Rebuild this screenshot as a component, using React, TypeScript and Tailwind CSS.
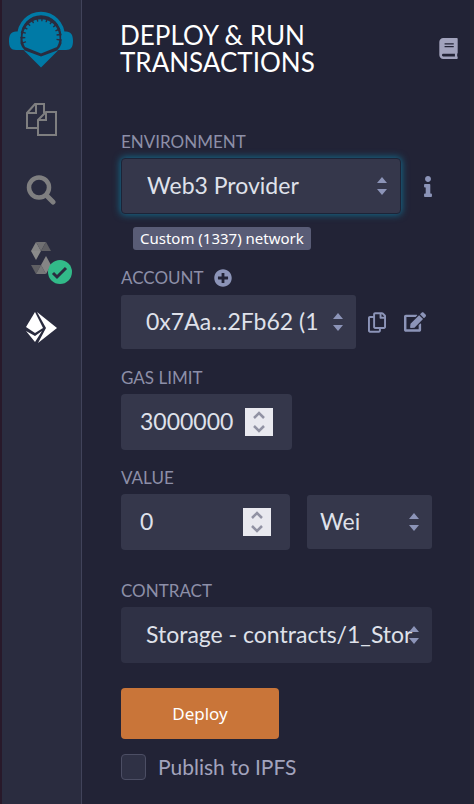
import { useState, type ReactNode } from "react";
import { FaBook, FaEdit, FaInfo, FaPlusCircle, FaRegCopy } from "react-icons/fa";

function SelectBox({
  id,
  label,
  value,
  className,
  textClass = "pl-[25px]",
}: {
  id: string;
  label?: string;
  value: string;
  className: string;
  textClass?: string;
}) {
  return (
    <div className={`relative ${className}`}>
      <select
        id={id}
        aria-label={label}
        className={`h-full w-full appearance-none rounded-[3px] bg-transparent pb-[2px] text-[23px] text-[#dfe1ea] outline-none ${textClass}`}
      >
        <option>{value}</option>
      </select>
      <svg
        viewBox="0 0 10 18"
        className="pointer-events-none absolute top-1/2 right-[13px] h-[18px] w-[10px] -translate-y-1/2 fill-[#8c94b8]"
      >
        <path d="M5 0 10 6H0ZM0 12H10L5 18Z" />
      </svg>
    </div>
  );
}

function NumberBox({ id, initial, className }: { id: string; initial: number; className: string }) {
  const [value, setValue] = useState(initial);
  return (
    <div className={`flex h-14 items-center rounded bg-[#35374b] px-[19px] ${className}`}>
      <input
        id={id}
        type="number"
        value={value}
        onChange={(e) => setValue(Number(e.target.value))}
        className="min-w-0 flex-1 bg-transparent pb-[2px] text-[23px] text-[#dfe1ea] outline-none [appearance:textfield] [&::-webkit-inner-spin-button]:appearance-none"
      />
      <div className="flex h-7 w-7 flex-col bg-[#e9e9ef] text-[#9192a3]">
        <button type="button" aria-label="Increase" onClick={() => setValue(value + 1)} className="flex h-[14px] items-center justify-center">
          <svg viewBox="0 0 12 8" className="h-2 w-3" fill="none" stroke="currentColor" strokeWidth="2.5">
            <path d="M1 7 6 2l5 5" />
          </svg>
        </button>
        <button type="button" aria-label="Decrease" onClick={() => setValue(value - 1)} className="flex h-[14px] items-center justify-center">
          <svg viewBox="0 0 12 8" className="h-2 w-3" fill="none" stroke="currentColor" strokeWidth="2.5">
            <path d="M1 1l5 5 5-5" />
          </svg>
        </button>
      </div>
    </div>
  );
}

function Label({ htmlFor, children }: { htmlFor: string; children: ReactNode }) {
  return (
    <label htmlFor={htmlFor} className="block text-[17px] leading-6 text-[#8d8fa8]">
      {children}
    </label>
  );
}

function RemixLogo() {
  return (
    <svg viewBox="0 0 66 58" className="h-[58px] w-[66px]">
      <path d="M11 29V26a22 22.500 0 0 1 44 0v3" fill="none" stroke="#007aa6" strokeWidth="3.500" />
      <path d="M12.500 21.500v12q1 3.500 4 6.500H8c-5 0-7-3-7-9s2-9.500 7-9.500ZM53.500 21.500v12q-1 3.500-4 6.500H58c5 0 7-3 7-9s-2-9.500-7-9.500Z" fill="#007aa6" />
      <path d="M17 37a18.500 18.500 0 1 1 32 0L33 43.500Z" fill="#007aa6" />
      <path
        d="M15.900 33.200a18.200 18.200 0 1 1 34.200 0"
        fill="none"
        stroke="#2a2c3f"
        strokeWidth="5"
        strokeDasharray="1.500 3.500"
      />
      <path d="M15.500 40 33 46.500 50.500 40 33 57.500Z" fill="#007aa6" />
    </svg>
  );
}

function Sidebar() {
  return (
    <nav className="flex w-20 shrink-0 flex-col items-center border-r border-[#41435a] bg-[#2a2c3f] pt-[10px] pr-px">
      <a href="#home" aria-label="Home">
        <RemixLogo />
      </a>
      <button type="button" aria-label="File explorer" className="mt-[34px]">
        <svg viewBox="0 0 34 34" className="h-[34px] w-[34px]" fill="none" stroke="#7f7f80" strokeWidth="2">
          <path d="M13 26H3V11L11 2h9v9M3 11h9V2" />
          <path d="M14 33V18l8-8h10v23ZM14 18h8v-8" />
        </svg>
      </button>
      <button type="button" aria-label="Search" className="mt-[39px]">
        <svg viewBox="0 0 30 30" className="h-[30px] w-[30px]" fill="none" stroke="#7f7f80">
          <circle cx="13" cy="12.500" r="10" strokeWidth="4.500" />
          <path d="m21 21 6 6" strokeWidth="5" strokeLinecap="round" />
        </svg>
      </button>
      <button type="button" aria-label="Solidity compiler" className="relative mt-[37px]">
        <svg viewBox="0 0 20 33" className="h-[33px] w-5">
          <path d="M5 0 0 9h10Z" fill="#858585" />
          <path d="M5 0h10l-5 9Z" fill="#707072" />
          <path d="M15 0 20 9H10Z" fill="#5f5f63" />
          <path d="M0 9h10l-5 9Z" fill="#8a8a8a" />
          <path d="M15 14 20 23H10Z" fill="#858585" />
          <path d="M0 23h10l-5 9Z" fill="#5f5f63" />
          <path d="M10 23 15 32H5Z" fill="#777778" />
          <path d="M10 23h10l-5 9Z" fill="#858585" />
        </svg>
        <svg viewBox="0 0 24 24" className="absolute top-[18px] left-[17px] h-6 w-6">
          <circle cx="12" cy="12" r="12" fill="#32ba89" />
          <path d="m5 13 4 4 9-9" fill="none" stroke="#2a2c3f" strokeWidth="3" />
        </svg>
      </button>
      <button type="button" aria-label="Deploy and run" className="mt-9">
        <svg viewBox="0 0 32 32" className="h-8 w-8" fill="#fff">
          <path d="M10 1 1 16l9 6 8-5Z" />
          <path d="m1 20 9 11 7-11-7 5Z" />
          <path d="M12 1 32 17 13 32l8-15Z" />
        </svg>
      </button>
    </nav>
  );
}

export default function App() {
  return (
    <div className="flex min-h-screen border-l-2 border-[#28192a] bg-[#222336] font-[Lato,'Noto_Sans',sans-serif]">
      <Sidebar />
      <main className="min-w-0 flex-1 border-r-4 border-[#272735] pt-[22px] pr-[38px] pl-[39px]">
        <header className="-mr-[26px] -ml-px flex items-center justify-between">
          <h1 className="w-[220px] text-[26px] leading-[27px] text-white">DEPLOY &amp; RUN TRANSACTIONS</h1>
          <a href="#docs" aria-label="Documentation" className="pb-px">
            <FaBook className="h-[21px] w-[19px] text-[#a2a3bd]" />
          </a>
        </header>

        <form className="mt-[54px]" onSubmit={(e) => e.preventDefault()}>
          <Label htmlFor="environment">ENVIRONMENT</Label>
          <div className="mt-1 flex items-center">
            <SelectBox
              id="environment"
              value="Web3 Provider"
              className="h-14 flex-1 rounded border border-[#1c2438] bg-[#35374b] shadow-[0_0_7px_1px_#14698a]"
            />
            <button type="button" aria-label="Environment info" className="flex w-[31px] justify-end">
              <FaInfo className="h-[21px] w-2 text-[#8c94b8]" />
            </button>
          </div>
          <span className="mt-[13px] ml-3 inline-block h-[23px] rounded-[3px] bg-[#595c76] px-[7px] align-top font-['Noto_Sans',sans-serif] text-[15px] leading-[22px] text-white">
            Custom (1337) network
          </span>

          <div className="mt-4 flex items-center gap-[10px]">
            <Label htmlFor="account">ACCOUNT</Label>
            <button type="button" aria-label="Add account">
              <FaPlusCircle className="h-[18px] w-[18px] text-[#8c94b8]" />
            </button>
          </div>
          <div className="mt-1 flex h-14 items-center">
            <SelectBox id="account" value="0x7Aa...2Fb62 (1" className="h-[54px] flex-1 rounded-[3px] bg-[#35374b]" />
            <button type="button" aria-label="Copy account" className="ml-3">
              <FaRegCopy className="h-[21px] w-[18px] text-[#8c94b8]" />
            </button>
            <button type="button" aria-label="Sign message" className="mr-[6px] ml-[18px]">
              <FaEdit className="h-5 w-[22px] text-[#8c94b8]" />
            </button>
          </div>

          <div className="mt-4">
            <Label htmlFor="gas">GAS LIMIT</Label>
            <NumberBox id="gas" initial={3000000} className="mt-1 w-[171px]" />
          </div>

          <div className="mt-4">
            <Label htmlFor="value">VALUE</Label>
            <div className="mt-1 flex items-center gap-[17px]">
              <NumberBox id="value" initial={0} className="w-[169px]" />
              <SelectBox
                id="unit"
                label="Unit"
                value="Wei"
                className="h-[54px] flex-1 rounded-[3px] bg-[#35374b]"
                textClass="pl-[13px]"
              />
            </div>
          </div>

          <div className="mt-[29px]">
            <Label htmlFor="contract">CONTRACT</Label>
            <SelectBox id="contract" value="Storage - contracts/1_Stor" className="mt-1 h-14 rounded bg-[#2f3145]" />
          </div>

          <button
            type="submit"
            className="mt-[25px] block h-[51px] w-[158px] rounded bg-[#c97539] font-['Noto_Sans',sans-serif] text-[17px] text-white"
          >
            Deploy
          </button>
          <div className="mt-[15px] flex items-center gap-3">
            <input
              id="ipfs"
              type="checkbox"
              className="h-[26px] w-[25px] appearance-none rounded border border-[#4c4e64] bg-[#2f3145] checked:bg-[#007aa6]"
            />
            <label htmlFor="ipfs" className="text-[21px] leading-6 text-[#a2a3bd]">
              Publish to IPFS
            </label>
          </div>
        </form>
      </main>
    </div>
  );
}
